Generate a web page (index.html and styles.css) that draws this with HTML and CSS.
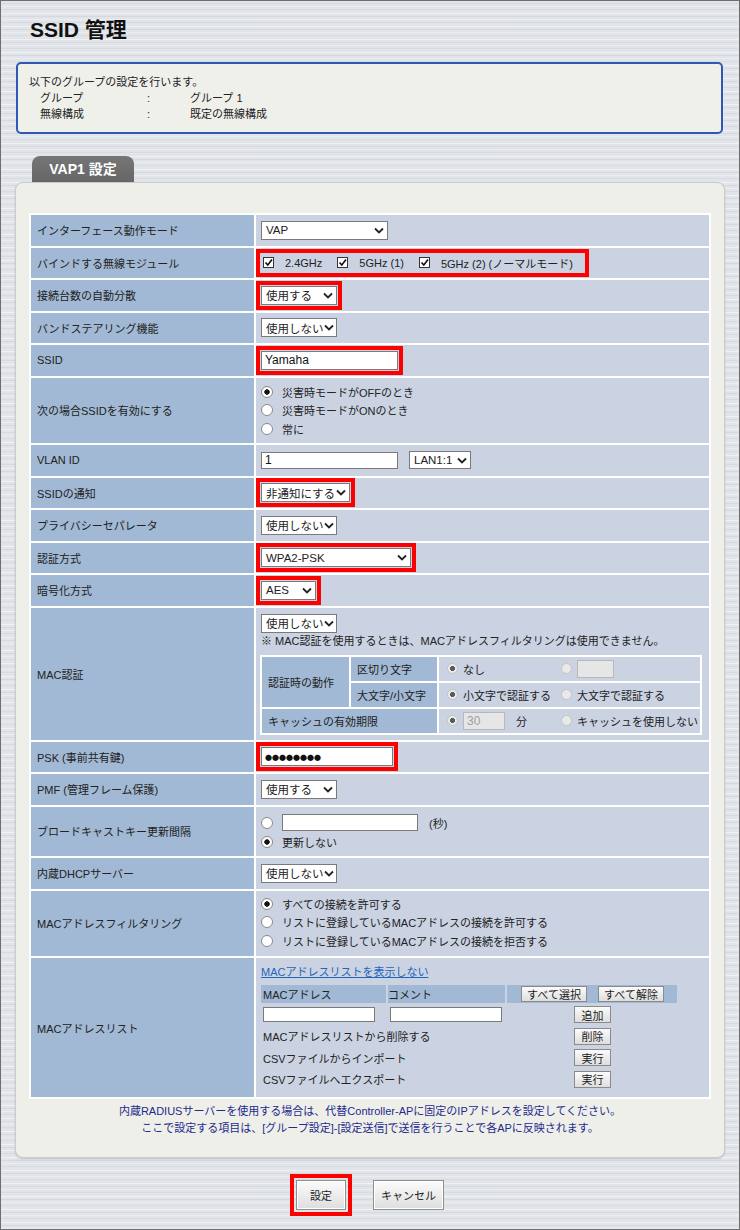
FILE: index.html
```html
<!DOCTYPE html>
<html lang="ja">

<head>
    <meta charset="utf-8">
    <title>SSID 管理</title>
    <link rel="stylesheet" href="styles.css">
</head>

<body>
    <div class="page">
        <h1 class="title">SSID 管理</h1>

        <div class="info">
            <p>以下のグループの設定を行います。</p>
            <div class="info-grid">
                <span>グループ</span><span>:</span><span>グループ 1</span>
                <span>無線構成</span><span>:</span><span>既定の無線構成</span>
            </div>
        </div>

        <div class="tab">VAP1 設定</div>
        <div class="panel">
            <table class="form">
                <tr>
                    <th>インターフェース動作モード</th>
                    <td><span class="sel mode">VAP<svg class="chev" width="10" height="7" viewBox="0 0 10 7"><path d="M1 1.5l4 4 4-4" /></svg></span></td>
                </tr>
                <tr>
                    <th>バインドする無線モジュール</th>
                    <td>
                        <span class="mark checks">
                            <span class="check"><svg class="cb" width="12" height="12" viewBox="0 0 12 12"><rect x="0.5" y="0.5" width="10" height="10" /><path d="M2.5 5.5l2.3 2.5 4.2-5.5" /></svg>2.4GHz</span>
                            <span class="check"><svg class="cb" width="12" height="12" viewBox="0 0 12 12"><rect x="0.5" y="0.5" width="10" height="10" /><path d="M2.5 5.5l2.3 2.5 4.2-5.5" /></svg>5GHz (1)</span>
                            <span class="check last"><svg class="cb" width="12" height="12" viewBox="0 0 12 12"><rect x="0.5" y="0.5" width="10" height="10" /><path d="M2.5 5.5l2.3 2.5 4.2-5.5" /></svg>5GHz (2) (ノーマルモード)</span>
                        </span>
                    </td>
                </tr>
                <tr>
                    <th>接続台数の自動分散</th>
                    <td><span class="mark"><span class="sel onoff">使用する<svg class="chev" width="10" height="7" viewBox="0 0 10 7"><path d="M1 1.5l4 4 4-4" /></svg></span></span></td>
                </tr>
                <tr>
                    <th>バンドステアリング機能</th>
                    <td><span class="sel onoff">使用しない<svg class="chev" width="10" height="7" viewBox="0 0 10 7"><path d="M1 1.5l4 4 4-4" /></svg></span></td>
                </tr>
                <tr>
                    <th>SSID</th>
                    <td><span class="mark"><input class="text ssid" type="text" value="Yamaha"></span></td>
                </tr>
                <tr>
                    <th>次の場合SSIDを有効にする</th>
                    <td class="lines">
                        <div class="line"><span class="radio on"></span>災害時モードがOFFのとき</div>
                        <div class="line"><span class="radio"></span>災害時モードがONのとき</div>
                        <div class="line"><span class="radio"></span>常に</div>
                    </td>
                </tr>
                <tr>
                    <th>VLAN ID</th>
                    <td>
                        <div class="inline">
                            <input class="text vlan" type="text" value="1">
                            <span class="sel port">LAN1:1<svg class="chev" width="10" height="7" viewBox="0 0 10 7"><path d="M1 1.5l4 4 4-4" /></svg></span>
                        </div>
                    </td>
                </tr>
                <tr>
                    <th>SSIDの通知</th>
                    <td><span class="mark"><span class="sel notify">非通知にする<svg class="chev" width="10" height="7" viewBox="0 0 10 7"><path d="M1 1.5l4 4 4-4" /></svg></span></span></td>
                </tr>
                <tr>
                    <th>プライバシーセパレータ</th>
                    <td><span class="sel onoff">使用しない<svg class="chev" width="10" height="7" viewBox="0 0 10 7"><path d="M1 1.5l4 4 4-4" /></svg></span></td>
                </tr>
                <tr>
                    <th>認証方式</th>
                    <td><span class="mark"><span class="sel auth">WPA2-PSK<svg class="chev" width="10" height="7" viewBox="0 0 10 7"><path d="M1 1.5l4 4 4-4" /></svg></span></span></td>
                </tr>
                <tr>
                    <th>暗号化方式</th>
                    <td><span class="mark"><span class="sel cipher">AES<svg class="chev" width="10" height="7" viewBox="0 0 10 7"><path d="M1 1.5l4 4 4-4" /></svg></span></span></td>
                </tr>
                <tr>
                    <th>MAC認証</th>
                    <td class="macauth">
                        <span class="sel onoff">使用しない<svg class="chev" width="10" height="7" viewBox="0 0 10 7"><path d="M1 1.5l4 4 4-4" /></svg></span>
                        <p class="hint">※ MAC認証を使用するときは、MACアドレスフィルタリングは使用できません。</p>
                        <table class="sub">
                            <tr>
                                <th rowspan="2" class="group">認証時の動作</th>
                                <th class="item">区切り文字</th>
                                <td>
                                    <div class="pair">
                                        <span class="opt"><span class="radio small on"></span>なし</span>
                                        <span class="opt"><span class="radio small"></span><input class="text dim sep" type="text" value="" disabled></span>
                                    </div>
                                </td>
                            </tr>
                            <tr>
                                <th class="item">大文字/小文字</th>
                                <td>
                                    <div class="pair">
                                        <span class="opt"><span class="radio small on"></span>小文字で認証する</span>
                                        <span class="opt"><span class="radio small"></span>大文字で認証する</span>
                                    </div>
                                </td>
                            </tr>
                            <tr>
                                <th colspan="2" class="group">キャッシュの有効期限</th>
                                <td>
                                    <div class="pair">
                                        <span class="opt"><span class="radio small on"></span><input class="text dim minutes" type="text" value="30" disabled><span class="unit">分</span></span>
                                        <span class="opt"><span class="radio small"></span>キャッシュを使用しない</span>
                                    </div>
                                </td>
                            </tr>
                        </table>
                    </td>
                </tr>
                <tr>
                    <th>PSK (事前共有鍵)</th>
                    <td><span class="mark"><input class="text psk" type="text" value="●●●●●●●●"></span></td>
                </tr>
                <tr>
                    <th>PMF (管理フレーム保護)</th>
                    <td><span class="sel onoff">使用する<svg class="chev" width="10" height="7" viewBox="0 0 10 7"><path d="M1 1.5l4 4 4-4" /></svg></span></td>
                </tr>
                <tr>
                    <th>ブロードキャストキー更新間隔</th>
                    <td class="rekey">
                        <div class="line tall"><span class="radio"></span><input class="text interval" type="text" value=""><span class="unit">(秒)</span></div>
                        <div class="line"><span class="radio on"></span>更新しない</div>
                    </td>
                </tr>
                <tr>
                    <th>内蔵DHCPサーバー</th>
                    <td><span class="sel onoff">使用しない<svg class="chev" width="10" height="7" viewBox="0 0 10 7"><path d="M1 1.5l4 4 4-4" /></svg></span></td>
                </tr>
                <tr>
                    <th>MACアドレスフィルタリング</th>
                    <td class="lines filter">
                        <div class="line"><span class="radio on"></span>すべての接続を許可する</div>
                        <div class="line"><span class="radio"></span>リストに登録しているMACアドレスの接続を許可する</div>
                        <div class="line"><span class="radio"></span>リストに登録しているMACアドレスの接続を拒否する</div>
                    </td>
                </tr>
                <tr>
                    <th>MACアドレスリスト</th>
                    <td class="maclist">
                        <a class="link" href="#">MACアドレスリストを表示しない</a>
                        <div class="mac-grid">
                            <div class="mac-head">MACアドレス</div>
                            <div class="mac-head">コメント</div>
                            <div class="mac-head buttons">
                                <button class="btn">すべて選択</button>
                                <button class="btn">すべて解除</button>
                            </div>
                            <div class="mac-cell"><input class="text mac" type="text" value=""></div>
                            <div class="mac-cell"><input class="text mac" type="text" value=""></div>
                            <div class="mac-act"><button class="btn">追加</button></div>
                            <div class="mac-cell wide">MACアドレスリストから削除する</div>
                            <div class="mac-act"><button class="btn">削除</button></div>
                            <div class="mac-cell wide">CSVファイルからインポート</div>
                            <div class="mac-act"><button class="btn">実行</button></div>
                            <div class="mac-cell wide">CSVファイルへエクスポート</div>
                            <div class="mac-act"><button class="btn">実行</button></div>
                        </div>
                    </td>
                </tr>
            </table>
            <p class="note">
                内蔵RADIUSサーバーを使用する場合は、代替Controller-APに固定のIPアドレスを設定してください。<br>
                ここで設定する項目は、[グループ設定]-[設定送信]で送信を行うことで各APに反映されます。
            </p>
        </div>

        <div class="actions">
            <span class="mark submit"><button class="btn big save">設定</button></span>
            <button class="btn big cancel">キャンセル</button>
        </div>
    </div>
</body>

</html>
```

FILE: styles.css
```css
* {
    box-sizing: border-box;
}

body {
    margin: 0;
    height: 1230px;
    border: 1px solid #6e6e6e;
    font-family: "Liberation Sans", "Noto Sans CJK JP", sans-serif;
    font-size: 11px;
    color: #222;
    background-color: #e1e4e9;
    background-image: repeating-linear-gradient(180deg,
            rgba(255, 255, 255, .5) 0 1px,
            rgba(0, 0, 0, 0) 1px 3px,
            rgba(0, 0, 0, .05) 3px 4px,
            rgba(0, 0, 0, 0) 4px 6px,
            rgba(255, 255, 255, .3) 6px 7px,
            rgba(0, 0, 0, 0) 7px 9px,
            rgba(0, 0, 0, .04) 9px 10px,
            rgba(0, 0, 0, 0) 10px 13px);
}

p {
    margin: 0;
}

.page {
    padding: 15px 14px 0;
}

.title {
    margin: 0 0 18px 15px;
    font-size: 21px;
    line-height: 28px;
    font-weight: bold;
    color: #111;
}

.info {
    margin: 0 2px 0 1px;
    padding: 10px 11px;
    border: 2px solid #2f58b4;
    border-radius: 5px;
    background: #f0f0eb;
    line-height: 16px;
}

.info-grid {
    display: grid;
    grid-template-columns: 107px 43px auto;
    padding-left: 11px;
}

.tab {
    width: 102px;
    height: 26px;
    margin: 22px 0 0 17px;
    border-radius: 8px 8px 0 0;
    background: linear-gradient(#767676, #666);
    color: #fff;
    font-size: 14px;
    font-weight: bold;
    line-height: 27px;
    text-align: center;
}

.panel {
    padding: 30px 13px 20px;
    border: 1px solid #cbcbcb;
    border-radius: 8px;
    background: #efefe9;
    box-shadow: 0 1px 2px rgba(0, 0, 0, .15);
}

/* main form table */

.form {
    width: 100%;
    border-spacing: 2px;
    background: #fff;
}

.form > tbody > tr > th {
    width: 223px;
    height: 30.5px;
    padding: 0 6px;
    background: #a1b9d4;
    font-weight: normal;
    text-align: left;
    vertical-align: middle;
}

.form > tbody > tr > td {
    height: 30.5px;
    padding: 0 5px;
    background: #cbd3e3;
    vertical-align: middle;
}

.form > tbody > tr > td.lines {
    padding: 5px 5px;
}

.form > tbody > tr > td.filter {
    padding: 4px 5px 6px;
}

.form > tbody > tr > td.rekey {
    padding: 6px 5px 5px;
}

.form > tbody > tr > td.macauth {
    padding: 6px 5px 5px;
}

.form > tbody > tr > td.maclist {
    padding: 4px 5px 8px;
}

.line {
    display: flex;
    align-items: center;
    height: 18.5px;
}

.line.tall {
    height: 20px;
}

.inline {
    display: flex;
    align-items: center;
    gap: 11px;
}

/* red annotation frame */

.mark {
    display: inline-flex;
    align-items: center;
    margin-left: -5px;
    padding: 1px;
    border: 4px solid #f00;
    vertical-align: middle;
}

.mark.checks {
    padding: 2px 12px 2px 3px;
}

.mark.submit {
    margin: 0;
    padding: 2px;
}

/* fake selects */

.sel {
    display: inline-flex;
    align-items: center;
    justify-content: space-between;
    height: 19px;
    padding: 0 3px 0 4px;
    border: 1px solid #7a7a7a;
    background: #fff;
    font-size: 11.5px;
    white-space: nowrap;
    vertical-align: middle;
}

.chev {
    flex: none;
}

.chev path {
    fill: none;
    stroke: #222;
    stroke-width: 1.8;
}

.sel.mode {
    width: 127px;
}

.sel.onoff {
    width: 76px;
}

.sel.notify {
    width: 89px;
}

.sel.auth {
    width: 150px;
}

.sel.cipher {
    width: 55px;
}

.sel.port {
    width: 62px;
    height: 18px;
}

/* text inputs */

.text {
    height: 19px;
    margin: 0;
    padding: 0 3px;
    border: 1px solid #7a7a7a;
    background: #fff;
    font: inherit;
    font-size: 12px;
    color: #111;
    vertical-align: middle;
}

.text.ssid,
.text.vlan {
    width: 137px;
}

.text.vlan {
    height: 17px;
}

.text.psk {
    width: 132px;
    font-family: "Noto Sans CJK JP", sans-serif;
    font-size: 7px;
}

.text.interval {
    width: 136px;
    height: 17px;
}

.text.mac {
    width: 112px;
    height: 15px;
}

.text.dim {
    border-color: #b9b9b9;
    background: #e6e6e6;
    color: #a0a0a0;
}

.text.sep {
    width: 37px;
    height: 18px;
}

.text.minutes {
    width: 42px;
    height: 18px;
}

.unit {
    margin-left: 11px;
}

/* checkboxes and radios */

.check {
    display: inline-flex;
    align-items: center;
    margin-right: 15px;
}

.check.last {
    margin-right: 0;
}

.cb {
    margin-right: 10px;
}

.cb rect {
    fill: #fff;
    stroke: #333;
}

.cb path {
    fill: none;
    stroke: #111;
    stroke-width: 1.6;
}

.radio {
    display: inline-block;
    flex: none;
    width: 12px;
    height: 12px;
    margin-right: 9px;
    border: 1px solid #8a8a8a;
    border-radius: 50%;
    background: #fff;
}

.radio.on {
    background: radial-gradient(circle, #111 0 2.4px, #fff 3px);
}

.radio.small {
    width: 11px;
    height: 11px;
    margin-right: 5px;
    border-color: #c4c4c4;
    background: #e9e9e9;
}

.radio.small.on {
    background: radial-gradient(circle, #5a5a5a 0 2.2px, #e9e9e9 2.8px);
}

/* MAC auth sub table */

.hint {
    line-height: 17px;
    margin-bottom: 5px;
}

.sub {
    width: 442px;
    margin-left: -1px;
    border-spacing: 2px;
    background: #fff;
}

.sub th,
.sub td {
    height: 24px;
    padding: 0;
    font-weight: normal;
    text-align: left;
    vertical-align: middle;
}

.sub th {
    background: #a1b9d4;
}

.sub th.group {
    width: 87px;
    padding-left: 6px;
}

.sub th.item {
    width: 86px;
    padding-left: 6px;
}

.sub td {
    background: #cbd3e3;
}

.pair {
    display: grid;
    grid-template-columns: 114px auto;
    align-items: center;
    padding-left: 8px;
}

.opt {
    display: flex;
    align-items: center;
}

/* MAC address list */

.link {
    display: block;
    height: 20px;
    line-height: 20px;
    color: #2266bb;
    text-decoration: underline;
}

.mac-grid {
    display: grid;
    grid-template-columns: 125px 117px 170px;
    grid-template-rows: 18px repeat(4, 21.5px);
    column-gap: 2px;
    margin-top: 3px;
}

.mac-head {
    display: flex;
    align-items: center;
    padding-left: 2px;
    background: #a1b9d4;
}

.mac-head + .mac-head {
    padding-left: 0;
}

.mac-head.buttons {
    gap: 11px;
    padding-left: 14px;
}

.mac-head.buttons .btn {
    width: 66px;
    height: 16px;
}

.mac-cell {
    display: flex;
    align-items: center;
    padding-left: 2px;
    margin-top: 2px;
}

.mac-cell.wide {
    grid-column: span 2;
}

.mac-act {
    display: flex;
    align-items: center;
    padding-left: 67px;
    margin-top: 2px;
}

.mac-act .btn {
    width: 37px;
}

/* buttons */

.btn {
    display: inline-flex;
    align-items: center;
    justify-content: center;
    height: 17px;
    margin: 0;
    padding: 0;
    border: 1px solid #8a8a8a;
    background: linear-gradient(#fbfbfb, #dedede);
    font: inherit;
    color: #222;
}

.btn.big {
    height: 30px;
    border-color: #8e8e8e;
    box-shadow: inset 0 0 0 1px #fff;
}

.btn.save {
    width: 50px;
}

.btn.cancel {
    width: 71px;
}

.note {
    margin-top: 4px;
    line-height: 17px;
    text-align: center;
    color: #1d2a8e;
}

.actions {
    display: flex;
    justify-content: center;
    align-items: center;
    gap: 21px;
    margin-top: 16px;
    padding-right: 6px;
}
```
